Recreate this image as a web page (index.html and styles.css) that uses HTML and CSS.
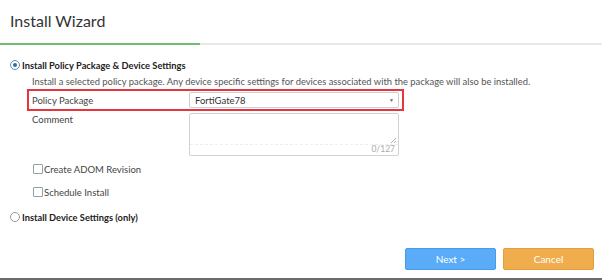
FILE: index.html
```html
<!DOCTYPE html>
<html>
<head>
<meta charset="utf-8">
<link rel="stylesheet" href="styles.css">
</head>
<body>
<div class="wizard">
  <div class="header">Install Wizard</div>
  <div class="progress"><div class="progress-done"></div></div>
  <div class="content">
    <label class="radio-row strong">
      <span class="radio checked"></span>Install Policy Package &amp; Device Settings
    </label>
    <div class="sub">
      <div class="desc">Install a selected policy package. Any device specific settings for devices associated with the package will also be installed.</div>
      <div class="field highlight">
        <div class="flabel">Policy Package</div>
        <div class="select"><span>FortiGate78</span><span class="caret">▼</span></div>
      </div>
      <div class="field">
        <div class="flabel">Comment</div>
        <div class="textarea">
          <svg class="grip" width="7" height="7" viewBox="0 0 7 7"><path d="M6 1L1 6M6 4L4 6" stroke="#999" stroke-width="0.8"/></svg>
          <span class="count">0/127</span>
        </div>
      </div>
      <label class="check-row first"><span class="checkbox"></span>Create ADOM Revision</label>
      <label class="check-row"><span class="checkbox"></span>Schedule Install</label>
    </div>
    <label class="radio-row strong">
      <span class="radio"></span>Install Device Settings (only)
    </label>
  </div>
  <div class="footer">
    <button class="btn next">Next &gt;</button>
    <button class="btn cancel">Cancel</button>
  </div>
</div>
</body>
</html>
```
FILE: styles.css
```css
html, body { margin: 0; padding: 0; background: #fff; }
body { font-family: Lato, "Open Sans", sans-serif; color: #333; width: 602px; height: 280px; overflow: hidden; }
.wizard { width: 602px; height: 280px; display: flex; flex-direction: column; border-bottom: 2px solid #6b6b6b; box-sizing: border-box; }
.header { height: 43px; line-height: 40px; padding-left: 10px; font-size: 16px; color: #333; box-sizing: border-box; padding-top: 1px; }
.progress { height: 2px; background: #e9e9e9; }
.progress-done { width: 200px; height: 2px; background: #6fbf73; }
.content { padding: 12px 0 0 10px; flex: 1; }
.radio-row { display: flex; align-items: center; font-size: 9.3px; height: 16px; color: #222; }
.strong { font-weight: 700; }
.radio { width: 8px; height: 8px; border: 1px solid #5c8fb8; border-radius: 50%; margin-right: 2px; box-sizing: content-box; position: relative; }
.radio:not(.checked) { border-color: #999; }
.radio.checked::after { content: ""; position: absolute; left: 2px; top: 2px; width: 4px; height: 4px; border-radius: 50%; background: #2f6ea5; }
.sub { padding-left: 22px; }
.desc { font-size: 9.4px; color: #555; margin-top: 1px; height: 15px; line-height: 15px; }
.field { display: flex; align-items: flex-start; font-size: 9.5px; color: #444; }
.highlight { margin-left: -5px; width: 367px; height: 16px; border: 2px solid #e8353b; padding: 1px 3px; align-items: center; }
.flabel { width: 157px; }
.highlight .flabel { padding-left: 2px; margin-left: -2px; width: 157px; }
.select { width: 210px; height: 16px; border: 1px solid #cfcfcf; border-radius: 2px; display: flex; align-items: center; justify-content: space-between; padding: 0 4px 0 5px; box-sizing: border-box; font-size: 9.5px; color: #333; }
.caret { font-size: 5px; color: #666; }
.field:not(.highlight) { margin-top: 2px; }
.field:not(.highlight) .flabel { padding-top: 1px; }
.textarea { width: 210px; height: 43px; border: 1px solid #d2d2d2; border-radius: 2px; box-sizing: border-box; position: relative; }
.textarea::before { content: ""; position: absolute; left: 0; right: 0; top: 30px; border-top: 1px dashed #eee; }
.grip { position: absolute; right: 1px; top: 23px; }
.count { position: absolute; right: 3px; bottom: 1px; font-size: 8.5px; color: #aaa; }
.check-row { display: flex; align-items: center; font-size: 9.5px; color: #444; height: 14px; margin-top: 9px; }
.check-row.first { margin-top: 6px; }
.checkbox { width: 8px; height: 8px; border: 1px solid #8ea3a3; border-radius: 1px; margin-right: 1px; margin-left: 1px; }
.sub + .radio-row { margin-top: 10px; }
.footer { display: flex; justify-content: flex-end; gap: 7px; padding: 0 8px 8px 0; }
.btn { width: 91px; height: 22px; border-radius: 2px; color: #fff; font-family: Lato, sans-serif; font-size: 10px; cursor: pointer; }
.next { background: #5aacf8; border: 1px solid #4a9be6; }
.cancel { background: #f0ad4e; border: 1px solid #e59d3b; }
```
